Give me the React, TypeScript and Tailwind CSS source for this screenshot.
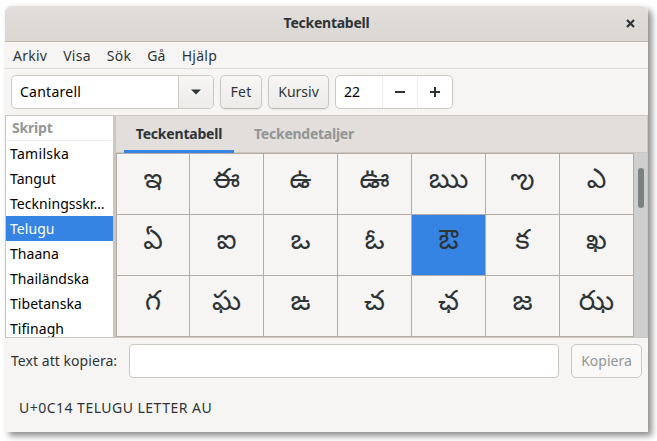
import React from "react";

const scripts = ["Tamilska", "Tangut", "Teckningsskr…", "Telugu", "Thaana", "Thailändska", "Tibetanska", "Tifinagh"];
const letters = ["ఇ", "ఈ", "ఉ", "ఊ", "ఋ", "ఌ", "ఎ", "ఏ", "ఐ", "ఒ", "ఓ", "ఔ", "క", "ఖ", "గ", "ఘ", "ఙ", "చ", "ఛ", "జ", "ఝ"];
const button = "flex h-[34px] items-center justify-center rounded-[5px] border border-[#cdc7c2] border-b-[#bfb8b1] bg-linear-to-b from-[#f7f6f5] to-[#edebe9] shadow-[0_1px_2px_rgba(0,0,0,0.07)]";

function TitleBar() {
  return (
    <header className="flex h-[37px] shrink-0 items-center rounded-t-[7px] border-t border-b border-t-[#f6f5f4] border-b-[#bfb8b1] bg-linear-to-b from-[#e1dedb] to-[#dad6d2]">
      <div className="w-[35px]" />
      <h1 className="flex-1 pb-px text-center font-bold tracking-[-0.25px]">Teckentabell</h1>
      <svg className="mr-[13px] mb-px ml-[13px] size-[9px]" viewBox="0 0 9 9" stroke="#2e3436" strokeWidth="2.2">
        <path d="M1 1 8 8M8 1 1 8" />
      </svg>
    </header>
  );
}

function Toolbar() {
  return (
    <div className="flex h-[46px] shrink-0 items-center pl-[6px]">
      <div className="flex h-[34px] w-[203px] overflow-hidden rounded-[5px] border border-[#cdc7c2] bg-white">
        <div className="flex w-[166px] items-center pl-2 tracking-[0.25px] text-black">Cantarell</div>
        <div className="flex flex-1 items-center justify-center border-l border-[#cdc7c2] bg-linear-to-b from-[#f7f6f5] to-[#edebe9]">
          <svg className="size-[10px]" viewBox="0 0 10 10" fill="#2e3436"><path d="M0 2.5h10L5 7.5z" /></svg>
        </div>
      </div>
      <div className={button + " ml-[6px] w-[42px] tracking-[0.3px]"}>Fet</div>
      <div className={button + " ml-[6px] w-[61px]"}>Kursiv</div>
      <div className="ml-[6px] flex h-[34px] w-[118px] rounded-[5px] border border-[#cdc7c2] bg-white">
        <div className="flex w-[46px] items-center pl-2 text-black">22</div>
        <div className="flex w-[35px] items-center justify-center border-l border-[#eeeceb]">
          <svg className="size-[10px]" viewBox="0 0 10 10" fill="#2e3436"><path d="M0 4h10v2H0z" /></svg>
        </div>
        <div className="flex flex-1 items-center justify-center border-l border-[#eeeceb]">
          <svg className="size-[10px]" viewBox="0 0 10 10" fill="#2e3436"><path d="M0 4h10v2H0zM4 0h2v10H4z" /></svg>
        </div>
      </div>
    </div>
  );
}

function Sidebar() {
  return (
    <aside className="flex w-[108px] shrink-0 flex-col overflow-hidden border-l border-[#cdc7c2] bg-white text-black">
      <div className="h-[25px] shrink-0 border-b border-[#f0efee] pl-[6px] leading-[23px] font-bold tracking-[-0.2px] text-[#949796]">Skript</div>
      {scripts.map((s) => (
        <div key={s} className={"h-[25px] shrink-0 pl-1 leading-[25px] whitespace-nowrap " + (s === "Tamilska" ? "tracking-[0.3px] " : "tracking-[0.05px] ") + (s === "Telugu" ? "bg-[#3584e4] text-white" : "")}>{s}</div>
      ))}
    </aside>
  );
}

export default function App() {
  return (
    <div className="h-[441px] w-[657px] overflow-hidden bg-white pt-[5px] pl-[5px] font-['Noto_Sans',sans-serif] text-[14px] leading-[20px] text-[#2e3436]">
      <main className="flex h-[427px] w-[643px] flex-col rounded-t-[7px] bg-[#f6f5f4] shadow-[4px_4px_6px_rgba(0,0,0,0.45)]">
        <TitleBar />
        <nav className="flex h-[27px] shrink-0 items-center gap-[16px] border-b border-[#dddbd8] pt-[2px] pl-2 tracking-[0.25px]">
          <span>Arkiv</span><span>Visa</span><span>Sök</span><span>Gå</span><span>Hjälp</span>
        </nav>
        <Toolbar />
        <section className="flex h-[223px] shrink-0 border-t border-b border-[#cdc7c2]">
          <Sidebar />
          <div className="w-[3px] shrink-0 bg-[#cdc7c2]" />
          <div className="flex min-w-0 flex-1 flex-col border-r border-[#cdc7c2]">
            <div className="flex h-[37px] shrink-0 border-b border-[#cdc7c2] bg-[#e1dedb] pl-2 font-bold">
              <div className="-mb-px h-[37px] w-[110px] border-b-[3px] border-[#3584e4] text-center leading-[35px] tracking-[-0.2px]">Teckentabell</div>
              <div className="ml-2 h-9 w-[124px] text-center leading-[35px] tracking-[-0.25px] text-[#929595]">Teckendetaljer</div>
            </div>
            <div className="flex h-[184px]">
              <div className="grid w-[518px] grid-cols-[73px_repeat(6,74px)] grid-rows-[61px_61px_61px] border-t border-l border-[#b3aca6] font-['Noto_Sans_Telugu','Noto_Sans',sans-serif] text-[27.5px]">
                {letters.map((c) => (
                  <div key={c} className={"flex items-center justify-center overflow-hidden border-r border-b border-[#b3aca6] pb-[2px] leading-none " + (c === "ఔ" ? "bg-[#3584e4]" : "")}>{c}</div>
                ))}
              </div>
              <div className="flex-1 bg-[#cecece] pt-[15px] pl-1">
                <div className="h-10 w-[6px] rounded-full bg-[#7e8182]" />
              </div>
            </div>
          </div>
        </section>
        <div className="flex h-[46px] shrink-0 items-center px-[6px]">
          <label className="w-[118px] tracking-[0.05px] whitespace-nowrap">Text att kopiera:</label>
          <div className="h-[34px] w-[430px] rounded-[4px] border border-[#cdc7c2] bg-white" />
          <div className="ml-3 flex h-[34px] w-[71px] items-center justify-center rounded-[5px] border border-[#cdc7c2] bg-[#faf9f8] text-[#929595]">Kopiera</div>
        </div>
        <footer className="pt-[14px] pl-[14px] tracking-[0.48px]">U+0C14 TELUGU LETTER AU</footer>
      </main>
    </div>
  );
}
